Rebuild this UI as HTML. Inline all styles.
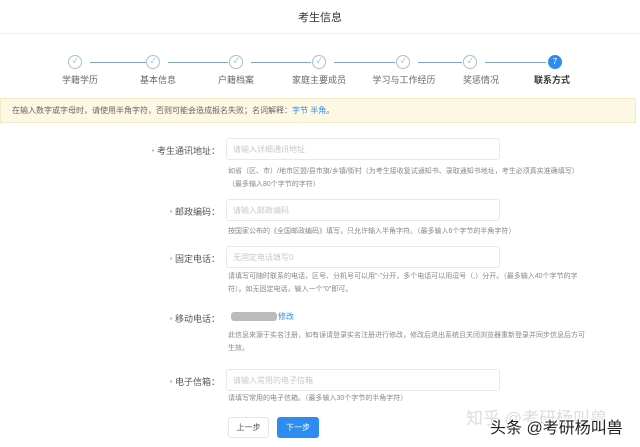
<!DOCTYPE html><html><head><meta charset="utf-8"><style>
body{margin:0;width:640px;height:447px;background:#fff;font-family:"Liberation Sans","Noto Sans CJK SC",sans-serif;position:relative;overflow:hidden;color:#555}
.a{position:absolute;white-space:nowrap}
.c{position:absolute;width:14px;height:14px;border:1px solid #a9bfd2;border-radius:50%;top:55px;box-sizing:border-box;color:#8aa;font-size:7px;text-align:center;line-height:12px;background:#fff}
.ln{position:absolute;top:62px;height:1px;background:#7fa5c6}
.lb{position:absolute;top:73px;font-size:9px;color:#666;transform:translateX(-50%);white-space:nowrap}
.fl{position:absolute;font-size:9px;color:#555;text-align:right;width:90px;left:130px}
.fl b{color:#e66;font-weight:normal;font-size:7px}
.in{position:absolute;left:226px;width:274px;height:22px;border:1px solid #e6e8ec;border-radius:3px;box-sizing:border-box;font-size:8px;color:#c4c8cc;padding:6px 6px;line-height:9px}
.h{position:absolute;left:228px;font-size:7px;color:#888;line-height:13px}
</style></head><body>
<div class="a" style="top:9px;left:0;width:640px;text-align:center;font-size:11px;color:#333">考生信息</div>
<div class="a" style="top:33px;left:0;width:640px;height:1px;background:#eef0f2"></div>
<div class="ln" style="left:90px;width:56px"></div>
<div class="ln" style="left:168px;width:60px"></div>
<div class="ln" style="left:251px;width:60px"></div>
<div class="ln" style="left:334px;width:61px"></div>
<div class="ln" style="left:418px;width:44px"></div>
<div class="ln" style="left:485px;width:61px"></div>
<div class="c" style="left:68px">✓</div><div class="c" style="left:146px">✓</div><div class="c" style="left:229px">✓</div><div class="c" style="left:312px">✓</div><div class="c" style="left:396px">✓</div><div class="c" style="left:463px">✓</div>
<div class="c" style="left:548px;background:#2d8cf0;border-color:#2d8cf0;color:#fff;font-size:8px">7</div>
<div class="lb" style="left:80px">学籍学历</div><div class="lb" style="left:158px">基本信息</div><div class="lb" style="left:236px">户籍档案</div><div class="lb" style="left:319px">家庭主要成员</div><div class="lb" style="left:404px">学习与工作经历</div><div class="lb" style="left:481px">奖惩情况</div><div class="lb" style="left:552px;color:#333;font-weight:bold">联系方式</div>
<div class="a" style="top:98px;left:0;width:636px;height:25px;background:#fdf8e3;border:1px solid #f5e9c4;box-sizing:border-box"></div>
<div class="a" style="top:105px;left:12px;font-size:8px;color:#666">在输入数字或字母时，请使用半角字符，否则可能会造成报名失败；名词解释：<span style="color:#2d8cf0">字节 半角</span>。</div>
<div class="fl" style="top:144px"><b>*</b> 考生通讯地址：</div>
<div class="in" style="top:138px">请输入详细通讯地址</div>
<div class="h" style="top:165px">如省（区、市）/地市区盟/县市旗/乡镇/街村（为考生接收复试通知书、录取通知书地址，考生必须真实准确填写）<br>（最多输入80个字节的字符）</div>
<div class="fl" style="top:205px"><b>*</b> 邮政编码：</div>
<div class="in" style="top:199px">请输入邮政编码</div>
<div class="h" style="top:225px">按国家公布的《全国邮政编码》填写，只允许输入半角字符。（最多输入6个字节的半角字符）</div>
<div class="fl" style="top:252px"><b>*</b> 固定电话：</div>
<div class="in" style="top:246px">无固定电话填写0</div>
<div class="h" style="top:270px">请填写可随时联系的电话，区号、分机号可以用"-"分开，多个电话可以用逗号（,）分开。（最多输入40个字节的字<br>符）。如无固定电话，输入一个"0"即可。</div>
<div class="fl" style="top:312px"><b>*</b> 移动电话：</div>
<div class="a" style="top:312px;left:231px;width:46px;height:9px;background:#bbb;border-radius:3px"></div>
<div class="a" style="top:311px;left:278px;font-size:8px;color:#2d8cf0">修改</div>
<div class="h" style="top:329px">此信息来源于实名注册，如有误请登录实名注册进行修改，修改后退出系统且关闭浏览器重新登录并同步信息后方可<br>生效。</div>
<div class="fl" style="top:375px"><b>*</b> 电子信箱：</div>
<div class="in" style="top:369px">请输入常用的电子信箱</div>
<div class="h" style="top:392px">请填写常用的电子信箱。（最多输入30个字节的半角字符）</div>
<div class="a" style="top:417px;left:228px;width:41px;height:21px;border:1px solid #e3e5e8;border-radius:3px;box-sizing:border-box;font-size:8px;color:#555;text-align:center;line-height:19px">上一步</div>
<div class="a" style="top:417px;left:277px;width:42px;height:21px;background:#2d8cf0;border-radius:3px;font-size:8px;color:#fff;text-align:center;line-height:21px">下一步</div>
<div class="a" style="top:404px;left:466px;font-size:17px;color:#ddd">知乎 @考研杨叫兽</div>
<div class="a" style="top:414px;left:490px;font-size:16px;color:#222;-webkit-text-stroke:2px #fff;paint-order:stroke">头条 @考研杨叫兽</div>
</body></html>
